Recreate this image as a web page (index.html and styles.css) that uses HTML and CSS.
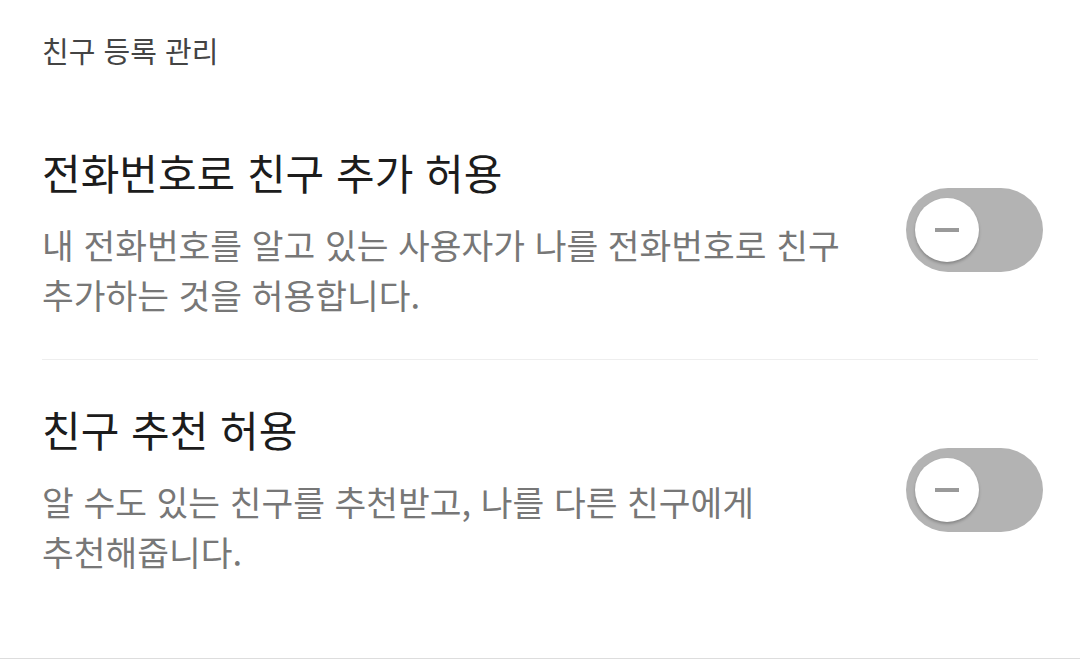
FILE: index.html
```
<!DOCTYPE html>
<html lang="ko">
<head>
  <meta charset="UTF-8">
  <title>친구 관리</title>
  <link rel="stylesheet" href="styles.css">
</head>
<body>
  <div class="screen">
    <div class="group-label">친구 등록 관리</div>

    <div class="setting-list">
      <div class="setting-row">
        <div class="setting-text">
          <div class="setting-title">전화번호로 친구 추가 허용</div>
          <div class="setting-desc">내 전화번호를 알고 있는 사용자가 나를 전화번호로 친구 추가하는 것을 허용합니다.</div>
        </div>
        <div class="switch">
          <span class="switch-thumb"><span class="switch-mark"></span></span>
        </div>
      </div>

      <div class="setting-row">
        <div class="setting-text">
          <div class="setting-title">친구 추천 허용</div>
          <div class="setting-desc">알 수도 있는 친구를 추천받고, 나를 다른 친구에게 추천해줍니다.</div>
        </div>
        <div class="switch">
          <span class="switch-thumb"><span class="switch-mark"></span></span>
        </div>
      </div>
    </div>
  </div>
</body>
</html>
```

FILE: styles.css
```
body {
  margin: 0;
  background-color: #ffffff;
  font-family: "Noto Sans CJK KR", "Noto Sans", sans-serif;
  color: #1c1c1c;
  word-break: keep-all;
}
.screen {
  height: 658px;
  border-bottom: 1px solid #dddddd;
  padding: 0 42px 0 42px;
}
.group-label {
  font-size: 29px;
  line-height: 36px;
  color: #444444;
  padding-top: 32px;
}
.setting-list {
  display: flex;
  flex-direction: column;
}
.setting-row {
  display: flex;
  align-items: center;
  gap: 40px;
  padding: 43px 0 40px 0;
  border-bottom: 1px solid #eeeeee;
}
.setting-row:first-child {
  padding-top: 78px;
}
.setting-row:first-child .switch {
  margin-top: -5px;
}
.setting-row:last-child {
  border-bottom: none;
}
.setting-text {
  flex: 1;
  display: flex;
  flex-direction: column;
  gap: 21px;
}
.setting-title {
  font-size: 42px;
  line-height: 52px;
  color: #1c1c1c;
}
.setting-desc {
  font-size: 34.5px;
  line-height: 50px;
  color: #777777;
}
.switch {
  width: 137px;
  height: 84px;
  border-radius: 42px;
  background-color: #b3b3b3;
  display: flex;
  align-items: center;
  padding-left: 9px;
  box-sizing: border-box;
  flex-shrink: 0;
  margin-right: -5px;
}
.switch-thumb {
  width: 64px;
  height: 64px;
  border-radius: 50%;
  background-color: #ffffff;
  box-shadow: 0 2px 3px rgba(0, 0, 0, 0.25);
  display: flex;
  align-items: center;
  justify-content: center;
}
.switch-mark {
  width: 24px;
  height: 4px;
  background-color: #9a9a9a;
}
```
